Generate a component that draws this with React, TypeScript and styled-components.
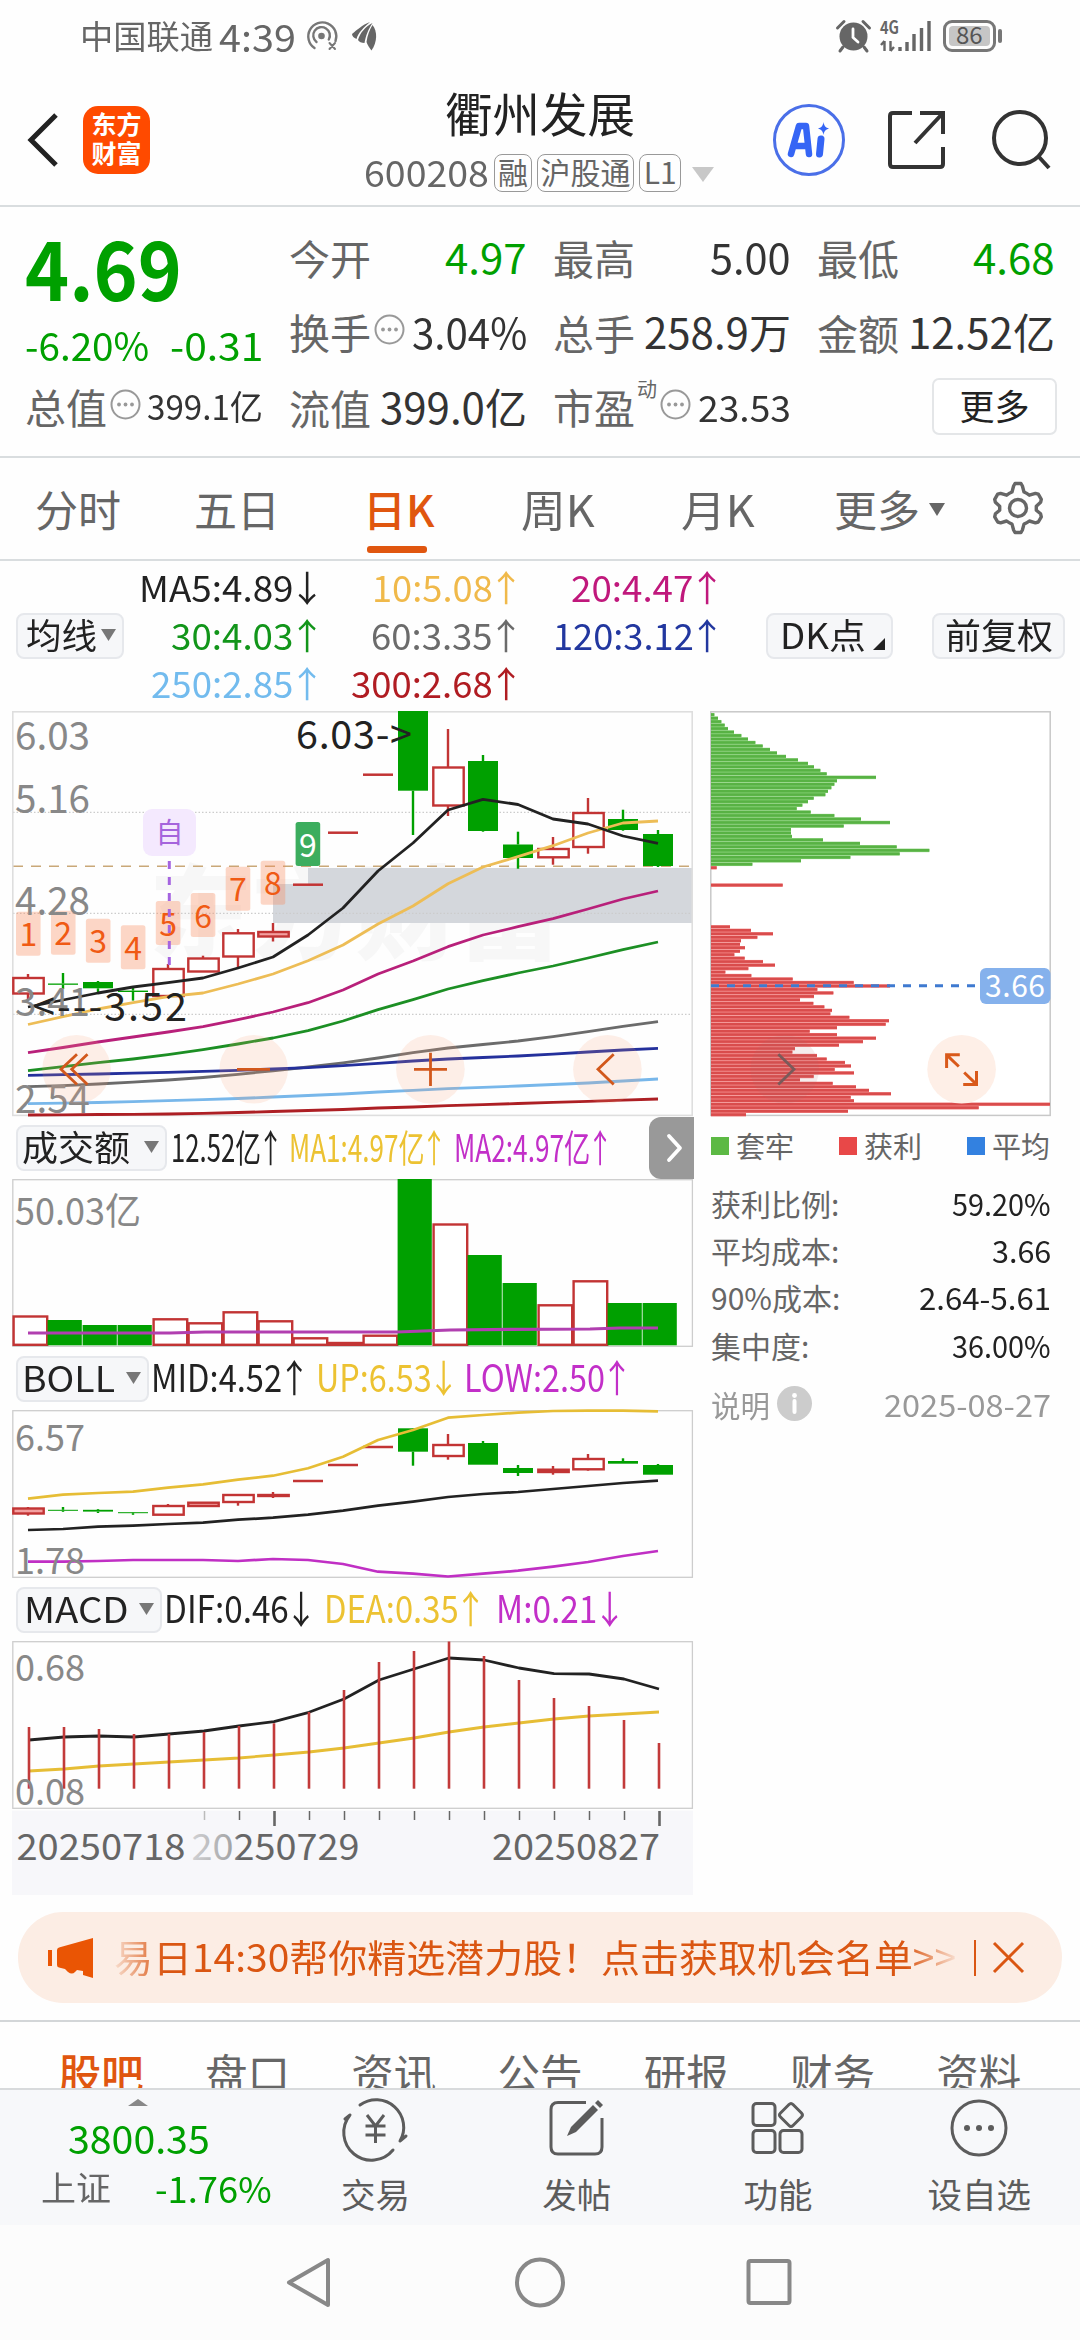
import React, { useLayoutEffect, useRef, useState } from "react";
import styled, { createGlobalStyle } from "styled-components";

const GREEN = "#00a000";
const CANDLE_RED = "#c23434";
const INK = "#222222";
const GRAY = "#666666";
const ORANGE = "#e0560f";
const FONT = '"Noto Sans CJK SC", "Noto Sans", sans-serif';

const GlobalStyle = createGlobalStyle`
  * { box-sizing: border-box; }
  body { margin: 0; background: #fefefe; font-family: ${FONT}; }
`;

/* ---------- text fitted to a column width ---------- */

const FitBox = styled.span<{ $w: number }>`
  display: block;
  flex: none;
  width: ${(p) => p.$w}px;
  white-space: nowrap;
  line-height: 1.2;
`;
const FitInner = styled.span`
  display: inline-block;
  transform-origin: 0 50%;
  vertical-align: top;
`;

function Fit({ w, children }: { w: number; children: React.ReactNode }) {
  const ref = useRef<HTMLSpanElement>(null);
  const [scale, setScale] = useState(1);
  useLayoutEffect(() => {
    if (ref.current) setScale(w / ref.current.offsetWidth);
  }, [w]);
  return (
    <FitBox $w={w}>
      <FitInner ref={ref} style={{ transform: `scaleX(${scale})` }}>
        {children}
      </FitInner>
    </FitBox>
  );
}

const ArrowGlyph = styled.span`
  display: inline-block;
  margin: 0 -0.2em 0 -0.13em;
`;
const Up = () => <ArrowGlyph>↑</ArrowGlyph>;
const Down = () => <ArrowGlyph>↓</ArrowGlyph>;

/* ---------- shell ---------- */

const Page = styled.div`
  width: 1080px;
  height: 2340px;
  overflow: hidden;
  display: flex;
  flex-direction: column;
  background: #fefefe;
  color: ${INK};
  font-family: ${FONT};
`;

const Icon = styled.svg`
  display: block;
  flex: none;
  fill: none;
  overflow: visible;
`;

/* ---------- status bar ---------- */

const StatusBar = styled.div`
  height: 72px;
  flex: none;
  display: flex;
  align-items: center;
  padding: 0 77px 0 80px;
  color: ${GRAY};
`;
const Carrier = styled.div`
  font-size: 33px;
  margin-right: 6px;
`;
const Clock = styled.div`
  font-size: 38px;
  margin-right: 10px;
  padding-bottom: 1px;
`;
const Spacer = styled.div`
  flex: 1;
`;
const StatusGlyphs = styled.div`
  display: flex;
  align-items: center;
  gap: 14px;
`;
const NetIcons = styled.div`
  display: flex;
  align-items: center;
  gap: 9px;
`;
const Battery = styled.div`
  position: relative;
  width: 53px;
  height: 32px;
  border: 3px solid #777;
  border-radius: 9px;
  padding: 3px;
  margin-left: 2px;
  margin-right: 7px;
  &::after {
    content: "";
    position: absolute;
    right: -9px;
    top: 6px;
    width: 4px;
    height: 14px;
    border-radius: 2px;
    background: #777;
  }
`;
const BatteryFill = styled.div`
  height: 20px;
  border-radius: 4px;
  background: #c6c6c6;
  font-size: 24px;
  display: flex;
  justify-content: center;
  align-items: center;
  padding-bottom: 3px;
  color: #555;
`;

/* ---------- header ---------- */

const Header = styled.header`
  height: 135px;
  flex: none;
  border-bottom: 2px solid #d9dddf;
  display: grid;
  grid-template-columns: 364px 350px 1fr;
`;
const HeaderLeft = styled.div`
  display: flex;
  align-items: center;
  padding: 2px 0 0 27px;
  gap: 25px;
`;
const Logo = styled.div`
  width: 67px;
  height: 68px;
  border-radius: 15px;
  background: #ff4a00;
  color: #fff;
  font-weight: 700;
  font-size: 25px;
  line-height: 29px;
  padding-top: 3px;
  text-align: center;
`;
const TitleBlock = styled.div`
  display: flex;
  flex-direction: column;
  padding-top: 12px;
`;
const StockName = styled.div`
  font-size: 47px;
  height: 60px;
  display: flex;
  padding-left: 81px;
`;
const CodeRow = styled.div`
  display: flex;
  align-items: center;
  height: 54px;
  margin-top: 1px;
  font-size: 36px;
  color: ${GRAY};
`;
const Tag = styled.span<{ $w: number; $ml: number }>`
  width: ${(p) => p.$w}px;
  height: 38px;
  margin-left: ${(p) => p.$ml}px;
  margin-top: 1px;
  border: 1.5px solid #999;
  border-radius: 8px;
  font-size: 30px;
  line-height: 32px;
  display: flex;
  justify-content: center;
`;
const HeaderTools = styled.div`
  display: flex;
  align-items: center;
  padding: 3px 0 0 59px;
`;
const AiBadge = styled.div`
  width: 72px;
  height: 72px;
  border: 3.5px solid #4a6fe8;
  border-radius: 50%;
  margin-right: 43px;
  display: flex;
  align-items: center;
  justify-content: center;
`;
const SearchSlot = styled.div`
  margin-left: 47px;
`;

/* ---------- quote ---------- */

const Quote = styled.section`
  height: 251px;
  flex: none;
  border-bottom: 2px solid #d9dddf;
  padding: 12px 25px 0 25px;
  display: grid;
  grid-template-columns: repeat(4, 1fr);
  column-gap: 26px;
`;
const QuoteCol = styled.div`
  display: flex;
  flex-direction: column;
`;
const QuoteCell = styled.div<{ $size?: number; $color?: string }>`
  height: 75px;
  display: flex;
  align-items: center;
  justify-content: space-between;
  font-size: ${(p) => p.$size ?? 42}px;
  color: ${(p) => p.$color ?? "#333"};
`;
const QuoteLabel = styled.div`
  display: flex;
  align-items: center;
  gap: 3px;
  font-size: 41px;
  color: ${GRAY};
`;
const Price = styled.div`
  height: 98px;
  display: flex;
  align-items: center;
  padding-bottom: 4px;
  font-size: 82px;
  font-weight: 700;
  color: ${GREEN};
`;
const Change = styled.div`
  height: 52px;
  display: flex;
  align-items: center;
  justify-content: space-between;
  padding-top: 2px;
  font-size: 39px;
  color: ${GREEN};
`;
const Dynamic = styled.sup`
  font-size: 20px;
  line-height: 20px;
  align-self: flex-start;
  margin: -3px 0 0 -1px;
`;
const MoreButton = styled.button`
  width: 125px;
  height: 57px;
  margin-left: auto;
  margin-right: -2px;
  border: 2px solid #e4e6e8;
  border-radius: 7px;
  background: #fff;
  font: 35px/1 ${FONT};
  color: ${INK};
  padding: 0 0 4px;
`;

/* ---------- period tabs ---------- */

const PeriodTabs = styled.nav`
  height: 103px;
  flex: none;
  border-bottom: 2px solid #d9dddf;
  display: flex;
  padding: 19px 36px 0 35px;
`;
const Tab = styled.div<{ $w: number; $active?: boolean }>`
  width: ${(p) => p.$w}px;
  flex: none;
  font-size: 43px;
  line-height: 62px;
  color: ${(p) => (p.$active ? ORANGE : GRAY)};
  font-weight: ${(p) => (p.$active ? 500 : 400)};
  display: flex;
  flex-direction: column;
  ${FitBox} {
    line-height: 62px;
  }
`;
const TabUnderline = styled.span`
  width: 60px;
  height: 7px;
  border-radius: 3px;
  background: ${ORANGE};
  margin: 7px 0 0 4px;
`;
const TabMore = styled.span`
  display: flex;
  align-items: center;
  gap: 9px;
`;
const GearSlot = styled.div`
  margin-top: 5px;
`;

/* ---------- moving averages ---------- */

const AverageBar = styled.section`
  height: 150px;
  flex: none;
  display: flex;
  align-items: center;
  padding: 0 16px;
`;
const Chip = styled.button<{ $w: number; $pl?: number; $ml?: number }>`
  width: ${(p) => p.$w}px;
  height: 46px;
  flex: none;
  display: flex;
  align-items: center;
  border: 2px solid #e6e8ec;
  border-radius: 8px;
  background: #f6f7f9;
  margin: 0 0 0 ${(p) => p.$ml ?? 0}px;
  padding: 0 0 4px ${(p) => p.$pl ?? 8}px;
  font: 35px/1.2 ${FONT};
  color: ${INK};
`;
const AverageGrid = styled.div`
  width: 594px;
  height: 144px;
  display: grid;
  grid-template-columns: 194px 199px 201px;
  grid-template-rows: repeat(3, 48px);
  font-size: 36px;
  margin-bottom: 3px;
`;
const Average = styled.div<{ $color: string }>`
  display: flex;
  align-items: center;
  justify-content: flex-end;
  color: ${(p) => p.$color};
`;

/* ---------- charts ---------- */

const Body = styled.main`
  display: flex;
  flex: none;
  height: 1186px;
  padding-left: 12px;
`;
const ChartColumn = styled.div`
  width: 682px;
  display: flex;
  flex-direction: column;
`;
const Plot = styled.svg`
  display: block;
  flex: none;
  overflow: visible;
  font-family: ${FONT};
`;
const IndicatorHeader = styled.div<{ $h: number }>`
  height: ${(p) => p.$h}px;
  flex: none;
  display: flex;
  align-items: center;
  padding-left: 4px;
  font-size: 38px;
`;
const Reading = styled.div<{ $color: string; $ml: number }>`
  margin-left: ${(p) => p.$ml}px;
  margin-bottom: 5px;
  color: ${(p) => p.$color};
`;
const Expander = styled.div`
  width: 45px;
  height: 62px;
  margin-left: auto;
  border-radius: 12px 0 0 12px;
  background: #999;
  display: flex;
  align-items: center;
  padding-left: 18px;
`;
const ChipsColumn = styled.aside`
  width: 341px;
  margin-left: 16px;
`;
const Legend = styled.div`
  height: 62px;
  display: flex;
  align-items: center;
  justify-content: space-between;
  padding: 0 1px 7px 1px;
  font-size: 29px;
  color: ${GRAY};
`;
const LegendItem = styled.div<{ $color: string }>`
  display: flex;
  align-items: center;
  gap: 7px;
  &::before {
    content: "";
    width: 18px;
    height: 18px;
    margin-top: 3px;
    background: ${(p) => p.$color};
  }
`;
const Stat = styled.div<{ $h?: number; $muted?: boolean }>`
  height: ${(p) => p.$h ?? 47.3}px;
  display: flex;
  align-items: center;
  justify-content: space-between;
  padding-left: 1px;
  font-size: 30px;
  color: ${(p) => (p.$muted ? "#999" : INK)};
`;
const StatLabel = styled.span<{ $muted?: boolean }>`
  display: flex;
  align-items: center;
  gap: 7px;
  color: ${(p) => (p.$muted ? "#999" : GRAY)};
`;

/* ---------- banner and bottom ---------- */

const Banner = styled.div`
  height: 91px;
  flex: none;
  margin: 15px 18px 17px;
  border-radius: 45px;
  background: #fcede4;
  color: #da5612;
  display: flex;
  align-items: center;
  padding-left: 30px;
`;
const Marquee = styled.div`
  margin: 0 18px 4px 20px;
  font-size: 38px;
  mask-image: linear-gradient(90deg, rgba(0, 0, 0, 0.1), #000 50px, #000 calc(100% - 50px), rgba(0, 0, 0, 0.1));
`;
const BannerRule = styled.span`
  width: 1.5px;
  height: 36px;
  background: #da5612;
  margin-right: 17px;
`;
const SectionTabs = styled.nav`
  height: 68px;
  flex: none;
  overflow: hidden;
  border-top: 2px solid #d3d6d8;
  display: flex;
  padding: 20px 28px 0;
`;
const SectionTab = styled.div<{ $active?: boolean }>`
  flex: 1;
  text-align: center;
  font-size: 42.5px;
  line-height: 60px;
  color: ${(p) => (p.$active ? ORANGE : GRAY)};
  font-weight: ${(p) => (p.$active ? 500 : 400)};
`;
const ActionBar = styled.div`
  height: 137px;
  flex: none;
  border-top: 2px solid #d8dadc;
  background: #f7f8fa;
  display: grid;
  grid-template-columns: 275px repeat(4, 201.2px);
`;
const IndexBlock = styled.div`
  color: ${GREEN};
  display: flex;
  flex-direction: column;
  align-items: center;
  padding-top: 9px;
  font-size: 39px;
`;
const IndexValue = styled.div`
  height: 54px;
  padding-top: 2px;
  margin: 6px 0 0 2px;
  line-height: 1;
  display: flex;
`;
const IndexRow = styled.div`
  width: 231px;
  margin-left: 38px;
  display: flex;
  align-items: center;
  justify-content: space-between;
  font-size: 36px;
  color: ${GREEN};
`;
const IndexName = styled.span`
  font-size: 34px;
  color: ${GRAY};
`;
const Action = styled.div`
  display: flex;
  flex-direction: column;
  align-items: center;
  padding-top: 9px;
  gap: 11px;
  font-size: 34.5px;
  color: #5c5c5c;
`;
const SystemNav = styled.div`
  flex: 1;
  background: #fcfcfc;
  display: flex;
  align-items: flex-start;
  padding: 32px 0 0 286px;
`;
const NavSlot = styled.div<{ $w: number }>`
  width: ${(p) => p.$w}px;
`;

/* ---------- data ---------- */

type Candle = { k: "r" | "g" | "l"; t: number; b: number; hi?: number; lo?: number };
const c = (k: Candle["k"], t: number, b = t, hi?: number, lo?: number): Candle => ({ k, t, b, hi, lo });

const DAILY: Candle[] = [
  c("r", 978, 993.5, 974, 1000), c("g", 983.5, 984.8, 973, 989), c("g", 982, 988.3, 981, 993),
  c("g", 990.6, 992, 988, 1000.6), c("r", 969, 996, 964), c("r", 958.5, 971.5, 955.7),
  c("r", 933.3, 956.5, 929, 967.5), c("r", 932, 936.5, 923, 941.5), c("l", 884.7), c("l", 832.7),
  c("l", 774.7), c("g", 711, 790.7, 711, 835), c("r", 767.5, 805.5, 729, 816),
  c("g", 761, 831, 755, 831.7), c("g", 844.5, 858, 831.7, 868.7), c("r", 849, 857.3, 837, 864.7),
  c("r", 813, 847, 798, 853.7), c("g", 819, 830, 809.7, 830.7), c("g", 834, 866, 830, 867),
];
const BOLL: Candle[] = [
  c("r", 1508.5, 1513.5, 1507, 1515.7), c("g", 1509.8, 1510.8, 1507, 1511.8), c("g", 1509.8, 1511.6, 1509, 1513),
  c("g", 1512.2, 1513.2, 1512, 1514.8), c("r", 1506, 1514.7, 1504), c("r", 1502.7, 1506),
  c("r", 1495, 1502, 1494, 1505.7), c("r", 1495, 1496, 1492, 1498), c("l", 1481), c("l", 1465),
  c("l", 1447), c("g", 1428.3, 1451.7, 1428, 1465.7), c("r", 1445, 1456, 1434, 1459.7),
  c("g", 1443, 1464.7, 1441), c("g", 1468, 1473, 1465, 1476), c("r", 1469.7, 1472, 1466, 1474.7),
  c("r", 1459, 1469.3, 1454, 1470.7), c("g", 1461, 1463.7, 1458.3), c("g", 1465, 1474.7, 1464),
];

const AVERAGES: { color: string; y: number[] }[] = [
  { color: "#ad1f24", y: [1115, 1114.8, 1114.5, 1114.3, 1114, 1113.3, 1112.5, 1111.5, 1110.5, 1109.5, 1108, 1107, 1105.7, 1104.6, 1103.5, 1102.4, 1101.3, 1100.2, 1099] },
  { color: "#78b7ea", y: [1103.7, 1103.2, 1102.5, 1101.7, 1100.7, 1099.6, 1098.5, 1097, 1095.5, 1094, 1092, 1090.3, 1088.7, 1087.3, 1086, 1084.5, 1083, 1081, 1079] },
  { color: "#6b6b6b", y: [1086.7, 1085.6, 1084, 1082.2, 1080, 1077.5, 1074.3, 1070.8, 1067, 1062.8, 1058, 1052.6, 1048, 1044.5, 1041, 1036.6, 1031.7, 1026.3, 1021.7] },
  { color: "#24309c", y: [1075.3, 1074.7, 1074, 1073.2, 1072.3, 1071.3, 1070.3, 1069, 1067.7, 1065.7, 1063.3, 1061, 1059, 1057.5, 1056, 1054.2, 1052, 1050, 1048.3] },
  { color: "#1c8f24", y: [1070.7, 1066.7, 1062.7, 1059, 1054.7, 1049.7, 1044, 1038, 1030.7, 1021, 1009.7, 999.7, 989, 980.7, 973, 966, 958, 949.7, 942] },
  { color: "#b8207a", y: [1052.7, 1047.5, 1042, 1037, 1032, 1026.7, 1019.7, 1012, 1002.7, 990, 974, 961, 946.7, 935, 926.7, 918.7, 909, 899, 891] },
  { color: "#edbd56", y: [1024.5, 1016.7, 1009, 1002.7, 996.7, 993, 984, 974, 960.7, 945, 924, 906, 883.7, 867, 856.7, 845.7, 833, 823, 821] },
  { color: "#222222", y: [1007, 1000, 993, 987, 982.7, 978, 968, 957, 935, 908, 871, 843, 810, 799.3, 804.5, 819, 824, 836, 843.3] },
];
const BANDS = [
  { color: "#e6bd35", y: [1498.7, 1494.7, 1493, 1491.7, 1487.7, 1484.3, 1479.7, 1475.7, 1468.3, 1456.7, 1440, 1430, 1417.7, 1415, 1412.7, 1411, 1410.7, 1410.7, 1411.3] },
  { color: "#222222", y: [1530, 1529, 1526.7, 1525.7, 1524, 1522.7, 1519.7, 1517.7, 1514.7, 1510.7, 1505.7, 1501.7, 1497, 1494, 1492, 1489, 1486, 1483, 1480.7] },
  { color: "#c02fc4", y: [1561.7, 1561.7, 1561, 1560, 1560, 1560, 1561, 1559, 1560, 1564, 1571.7, 1573.7, 1576.5, 1573.7, 1570.7, 1566.7, 1562, 1556, 1551] },
];
const VOLUME: [string, number][] = [
  ["r", 1316.5], ["g", 1320], ["g", 1325], ["g", 1325], ["r", 1319.3], ["r", 1323.3], ["r", 1312.3],
  ["r", 1321.3], ["r", 1338.3], ["r", 1343], ["r", 1335.7], ["g", 1179], ["r", 1224.5], ["g", 1255],
  ["g", 1283], ["r", 1305.3], ["r", 1281.3], ["g", 1303], ["g", 1303],
];
const MACD_BARS = [1727, 1727, 1729, 1734, 1734, 1732, 1726, 1723.3, 1712, 1690, 1662, 1651, 1641.5, 1656, 1680, 1698, 1706, 1720, 1743];
const DIF = [1740, 1737, 1736, 1737, 1734, 1731, 1726, 1721.7, 1712.3, 1699, 1680, 1669, 1658, 1660, 1668, 1673.7, 1674, 1679, 1689];
const DEA = [1771, 1769, 1766, 1764, 1762, 1760, 1758, 1755, 1752, 1748, 1743, 1738, 1732, 1727, 1723, 1719, 1716, 1714, 1712];

const CHIPS_HELD_GREEN = [10, 21, 31, 41, 51, 69, 91, 111, 133, 155, 177, 198, 225, 261, 291, 309, 328, 347, 495, 378, 370, 361, 351, 343, 308, 291, 274, 257, 299, 370, 450, 537, 398, 240, 240, 243, 336, 447, 557, 655, 566, 418, 270, 124];
const CHIPS_RED = [17, 0, 0, 0, 0, 215, 0, 0, 0, 0, 0, 0, 0, 0, 0, 0, 0, 57, 120, 186, 139, 90, 87, 102, 87, 70, 101, 156, 192, 112, 43, 121, 245, 428, 537, 319, 367, 309, 267, 307, 340, 363, 358, 415, 534, 524, 378, 296, 378, 495, 456, 384, 252, 244, 318, 347, 402, 420, 371, 429, 308, 267, 365, 435, 474, 540, 419, 429, 1017, 803, 411, 105];

const SIGNALS: [string, number][] = [["1", 911.7], ["2", 910.7], ["3", 918.7], ["4", 925.3], ["5", 901], ["6", 893], ["7", 866.7], ["8", 860.7], ["9", 822]];

const X0 = 28;
const STEP = 35;
const pts = (y: number[], x0 = X0) => y.map((v, i) => `${x0 + i * STEP},${v}`).join(" ");

/* ---------- chart parts ---------- */

function Candles({ data }: { data: Candle[] }) {
  return (
    <>
      {data.map((d, i) => {
        const x = X0 + i * STEP;
        const stroke = d.k === "g" ? GREEN : CANDLE_RED;
        if (d.k === "l") return <path key={i} d={`M${x - 15} ${d.t}H${x + 15}`} stroke={stroke} strokeWidth="2.5" />;
        return (
          <g key={i} stroke={stroke} strokeWidth="2.4">
            {d.hi && <path d={`M${x} ${d.hi}V${d.t}`} />}
            {d.lo && <path d={`M${x} ${d.b}V${d.lo}`} />}
            {d.k === "g" ? (
              <rect x={x - 15} y={d.t} width="30" height={d.b - d.t} fill={GREEN} stroke="none" />
            ) : (
              <rect x={x - 14.7} y={d.t} width="30.4" height={d.b - d.t} fill={d.b - d.t < 6 ? "#f3a0a0" : "#fff"} />
            )}
          </g>
        );
      })}
    </>
  );
}

const Frame = ({ y, h }: { y: number; h: number }) => (
  <rect x="12.8" y={y} width="679.6" height={h} fill="none" stroke="#cdcdcd" strokeWidth="1.3" />
);

const ScaleText = ({ x = 15, y, size = 39.5, w = 75, children }: { x?: number; y: number; size?: number; w?: number; children: string }) => (
  <text x={x} y={y} fontSize={size} textLength={w} lengthAdjust="spacingAndGlyphs" fill="#888">
    {children}
  </text>
);

function PriceChart() {
  return (
    <Plot width="682" height="406" viewBox="12 711 682 406">
      <text x="149" y="952" fontSize="103" fontWeight="900" fill="#000" opacity="0.025">东方财富</text>
      <path d="M273 884H308V868H692V923H273Z" fill="#d4d7dc" />
      <g stroke="#ccc" strokeWidth="1.2" strokeDasharray="1.5 2">
        <path d="M13 812.3H692M13 913.3H692M13 1014.3H692" />
      </g>
      <path d="M13 866.3H692" stroke="#c9a878" strokeWidth="1.4" strokeDasharray="10 8" />
      <rect x="12.8" y="711.8" width="679.4" height="403.6" fill="none" stroke="#dedede" strokeWidth="1.6" />
      <Candles data={DAILY} />
      {SIGNALS.map(([n, y], i) => (
        <g key={n}>
          <rect x={16 + i * 34.95} y={y} width="24.6" height="44" rx="2.5" fill={n === "9" ? "#3cad5e" : "#f98a5a"} fillOpacity={n === "9" ? 1 : 0.34} />
          <text x={28.3 + i * 34.95} y={y + 34.5} fontSize="32" textAnchor="middle" fill={n === "9" ? "#fff" : "#f05a14"}>{n}</text>
        </g>
      ))}
      <path d="M169.3 861V966" stroke="#a564e0" strokeWidth="3" strokeDasharray="8 8" />
      <rect x="143" y="809" width="53" height="47" rx="9" fill="#f4e9fe" />
      <text x="169.6" y="842.5" fontSize="28" textAnchor="middle" fill="#a564dc">自</text>
      <g fill="none" strokeWidth="2.8" strokeLinejoin="round">
        {AVERAGES.map((a) => <polyline key={a.color} points={pts(a.y)} stroke={a.color} />)}
      </g>
      <ScaleText y={750.3}>6.03</ScaleText>
      <ScaleText y={813.2}>5.16</ScaleText>
      <ScaleText y={915.3}>4.28</ScaleText>
      <ScaleText y={1016}>3.41</ScaleText>
      <ScaleText y={1113.2}>2.54</ScaleText>
      <text x="296" y="748.5" fontSize="39.5" textLength="116" fill={INK}>{"6.03->"}</text>
      <text x="33" y="1021" fontSize="39.5" textLength="154" fill={INK}>{"<---3.52"}</text>
      <g fill="#f9a078" fillOpacity="0.17">
        <circle cx="76.5" cy="1069.2" r="34.3" />
        <circle cx="253.7" cy="1069.2" r="34.3" />
        <circle cx="430.4" cy="1069.2" r="34.3" />
        <circle cx="607.4" cy="1069.2" r="34.3" />
      </g>
      <path
        d="M77 1054.3L61 1069.3L77 1084.5M87.5 1054.3L71.7 1069.3L87.5 1084.5M237 1069.3H270M414 1069.3H447M430.5 1052.7V1086M613.7 1054.3L598 1069.3L613.7 1084.5"
        fill="none" stroke="#d2581c" strokeWidth="2.8"
      />
    </Plot>
  );
}

function VolumeChart() {
  return (
    <Plot width="682" height="168" viewBox="12 1179 682 168">
      <Frame y={1179.7} h={166.6} />
      <ScaleText y={1224.5} size={37} w={126}>50.03亿</ScaleText>
      {VOLUME.map(([k, y], i) => {
        const x = 12.6 + i * 35;
        return k === "g"
          ? <rect key={i} x={x} y={y} width="34.2" height={1345.3 - y} fill={GREEN} />
          : <rect key={i} x={x + 1} y={y} width="33.6" height={Math.max(1344.8 - y, 1)} fill="#fff" stroke={CANDLE_RED} strokeWidth="2.4" />;
      })}
      <path d="M28 1333H170L205 1332H397L450 1330L510 1329.3L590 1329L620 1328H658" fill="none" stroke="#b13fb0" strokeWidth="3.2" />
    </Plot>
  );
}

function BollChart() {
  return (
    <Plot width="682" height="168" viewBox="12 1410 682 168">
      <Frame y={1410.7} h={166.6} />
      <Candles data={BOLL} />
      <g fill="none" strokeWidth="2.7" strokeLinejoin="round">
        {BANDS.map((a) => <polyline key={a.color} points={pts(a.y)} stroke={a.color} />)}
      </g>
      <ScaleText y={1450.5} size={37} w={70}>6.57</ScaleText>
      <ScaleText y={1574} size={37} w={70}>1.78</ScaleText>
    </Plot>
  );
}

function MacdChart() {
  return (
    <Plot width="682" height="254" viewBox="12 1641 682 254">
      <defs>
        <linearGradient id="dateFade" gradientUnits="userSpaceOnUse" x1="190" x2="240" y1="0" y2="0">
          <stop offset="0" stopColor={GRAY} stopOpacity="0.25" />
          <stop offset="0.8" stopColor={GRAY} stopOpacity="0.55" />
          <stop offset="1" stopColor={GRAY} />
        </linearGradient>
      </defs>
      <Frame y={1641.7} h={166.6} />
      <rect x="12" y="1810.5" width="681" height="84.5" fill="#f7f7fa" />
      <g fill="none" strokeWidth="2.8" strokeLinejoin="round">
        <polyline points={pts(DIF, 29)} stroke={INK} />
        <polyline points={pts(DEA, 29)} stroke="#e6bd35" />
      </g>
      <g stroke="#c23a3a" strokeWidth="2.6">
        {MACD_BARS.map((y, i) => <path key={i} d={`M${29 + i * 35} ${y}V1788.7`} />)}
      </g>
      <ScaleText y={1681} size={37} w={70}>0.68</ScaleText>
      <ScaleText y={1804.7} size={37} w={70}>0.08</ScaleText>
      {Array.from({ length: 14 }, (_, i) => i + 5).map((i) => {
        const major = i === 7 || i === 18;
        return <path key={i} d={`M${29.5 + i * 35} 1811V${major ? 1826 : 1820}`} stroke={i === 5 ? "#bbb" : GRAY} strokeWidth={major ? 2.6 : 1.5} />;
      })}
      <g fontSize="36" fill={GRAY}>
        <text x="16.5" y="1860" textLength="169" lengthAdjust="spacingAndGlyphs">20250718</text>
        <text x="191.5" y="1860" textLength="168" lengthAdjust="spacingAndGlyphs" fill="url(#dateFade)">20250729</text>
        <text x="492" y="1860" textLength="168" lengthAdjust="spacingAndGlyphs">20250827</text>
      </g>
    </Plot>
  );
}

function ChipChart() {
  const bar = (len: number, i: number, dark: string, light: string) => {
    const y = 713 + i * 3.478;
    return len ? (
      <g key={i}>
        <rect x="711" y={y} width={len / 3} height="3.5" fill={light} />
        <rect x="711" y={y + 0.4} width={len / 3} height="2.5" fill={dark} />
      </g>
    ) : null;
  };
  return (
    <Plot width="341" height="406" viewBox="710 711 341 406">
      <rect x="710.8" y="711.8" width="339.4" height="403.6" fill="#fff" stroke="#c8c8c8" strokeWidth="1.5" />
      {CHIPS_HELD_GREEN.map((l, i) => bar(l, i, "#58b244", "#80cd70"))}
      {CHIPS_RED.map((l, i) => bar(l, i + 44, "#d94c4c", "#f28282"))}
      <path d="M711 985.7H977" stroke="#3f7ad0" strokeWidth="3" strokeDasharray="8 8" />
      <rect x="980" y="968" width="70.5" height="36" rx="6" fill="#85b1ec" />
      <text x="985" y="997" fontSize="30" textLength="60" fill="#fff">3.66</text>
      <circle cx="784.7" cy="1069.2" r="34.3" fill="#b06a6a" fillOpacity="0.12" />
      <path d="M778.3 1054.3L794 1069.3L778.3 1084.5" fill="none" stroke="#7a5a5a" strokeWidth="2.8" />
      <circle cx="961.6" cy="1069.2" r="34.3" fill="#feefe7" />
      <path
        d="M959.8 1054.8H946.6V1068M946.6 1054.8L958.8 1066.5M963.2 1084.4H976.5V1071M976.5 1084.4L964.2 1072.5"
        fill="none" stroke="#d9591a" strokeWidth="3"
      />
    </Plot>
  );
}

/* ---------- small icons ---------- */

const Caret = ({ pad = 0, w = 15, h = 12, color = "#777" }: { pad?: number; w?: number; h?: number; color?: string }) => (
  <Icon width={w + pad} height={h} viewBox={`${-pad} 0 ${w + pad} ${h}`}>
    <path d={`M0 1H${w}L${w / 2} ${h + 1}Z`} fill={color} />
  </Icon>
);
const Dots = () => (
  <Icon width="31" height="31" viewBox="0 0 31 31">
    <circle cx="15.5" cy="13.5" r="14" stroke="#999" strokeWidth="2" />
    <g fill="#999"><circle cx="9" cy="13.5" r="1.9" /><circle cx="15.5" cy="13.5" r="1.9" /><circle cx="22" cy="13.5" r="1.9" /></g>
  </Icon>
);

function StatusIcons() {
  return (
    <StatusGlyphs>
      <Icon width="32" height="30" viewBox="0 0 32 30" stroke="#777" strokeWidth="2.4" strokeLinecap="round">
        <path d="M8.5 27A14 14 0 1 1 29.5 20" />
        <path d="M10.5 21A8.3 8.3 0 1 1 22.8 18.5" />
        <circle cx="15.5" cy="15" r="3.3" fill="#777" stroke="none" />
        <path d="M23.5 22L29 28M29 22L23.5 28" strokeWidth="2" />
      </Icon>
      <Icon width="25" height="29" viewBox="0 0 25 29">
        <g fill={GRAY}>
          <path d="M0 12C5 8 10 3 18 0C12 5 6 11 4.5 17C2 16 0 14 0 12Z" />
          <path d="M6 18C8 11 13 5 20.5 1C16 8 14 13 12.5 21C9.5 21 7 20 6 18Z" />
          <path d="M20.5 3C25.5 9 25.5 20 19.5 28.5C17.5 26 15.5 23 14.5 20C15.5 13 17.5 8 20.5 3Z" />
        </g>
      </Icon>
    </StatusGlyphs>
  );
}

const GEAR = "M20.6 4L22 1.5H28L29.4 4L31 10C33 10.8 34.8 11.9 36.4 13.2L42.4 11.4L45.3 12.2L48.3 17.4L47.6 20.3L43.3 24.2V28.2L47.6 31.8L48.3 34.8L45.3 40L42.4 40.8L36.4 39C34.8 40.3 33 41.3 31 42.1L29.4 48L28 50.5H22L20.6 48L19 42.1C17 41.3 15.2 40.3 13.6 39L7.6 40.8L4.7 40L1.7 34.8L2.4 31.8L6.7 28.2V24.2L2.4 20.3L1.7 17.4L4.7 12.2L7.6 11.4L13.6 13.2C15.2 11.9 17 10.8 19 10Z";

/* ---------- app ---------- */

export default function App() {
  return (
    <Page>
      <GlobalStyle />
      <StatusBar>
        <Carrier><Fit w={133}>中国联通</Fit></Carrier>
        <Clock><Fit w={77}>4:39</Fit></Clock>
        <StatusIcons />
        <Spacer />
        <NetIcons>
          <Icon width="35" height="32" viewBox="0 0 35 32">
            <circle cx="17.5" cy="16.5" r="14" fill={GRAY} />
            <path d="M1.5 8L8 1.5M33.5 8L27 1.5M7 27L4 31M28 27L31 31" stroke={GRAY} strokeWidth="3" strokeLinecap="round" />
            <path d="M17 9V17.5L22 22" stroke="#fff" strokeWidth="2.8" strokeLinecap="round" />
          </Icon>
          <Icon width="52" height="32" viewBox="0 0 52 32">
            <text x="0" y="14" fontSize="18" fontWeight="700" textLength="19" lengthAdjust="spacingAndGlyphs" fill={GRAY} fontFamily={FONT}>4G</text>
            <path d="M4.5 31V21M4.5 21L1 25M10.5 21V31M10.5 31L14 27" stroke={GRAY} strokeWidth="2.4" />
            <path d="M20 27V31M27 22V31M34 14V31M41.5 8V31M49 1V31" stroke={GRAY} strokeWidth="3.4" />
          </Icon>
          <Battery><BatteryFill><Fit w={27}>86</Fit></BatteryFill></Battery>
        </NetIcons>
      </StatusBar>

      <Header>
        <HeaderLeft>
          <Icon width="31" height="54" viewBox="0 0 31 54"><path d="M29 2L4 27L29 52" stroke={INK} strokeWidth="5" /></Icon>
          <Logo>东方<br />财富</Logo>
        </HeaderLeft>
        <TitleBlock>
          <StockName><Fit w={190}>衢州发展</Fit></StockName>
          <CodeRow>
            <Fit w={125}>600208</Fit>
            <Tag $w={38} $ml={5}>融</Tag>
            <Tag $w={98} $ml={5}>沪股通</Tag>
            <Tag $w={42} $ml={5}>L1</Tag>
            <Icon width="33" height="16" viewBox="-11 -3 33 16"><path d="M0 0H22L11 15Z" fill="#c8c8c8" /></Icon>
          </CodeRow>
        </TitleBlock>
        <HeaderTools>
          <AiBadge>
            <Icon width="42" height="36" viewBox="0 0 42 36">
              <path d="M3 32L11 4H18L21 32M8 24H20" stroke="#3565f5" strokeWidth="6.5" strokeLinejoin="round" strokeLinecap="round" />
              <path d="M33 17L31.5 32" stroke="#3565f5" strokeWidth="7" strokeLinecap="round" />
              <path d="M35.5 0C36.2 4 37.5 5.5 41 6.5C37.5 7.5 36.2 9 35.5 13C34.8 9 33.5 7.5 30 6.5C33.5 5.5 34.8 4 35.5 0Z" fill="#3565f5" />
            </Icon>
          </AiBadge>
          <Icon width="57" height="58" viewBox="0 0 57 58" stroke="#333" strokeWidth="4">
            <path d="M24 2H5Q2 2 2 5V53Q2 56 5 56H52Q55 56 55 53V36M32 2H55V23M55 2L27 32" />
          </Icon>
          <SearchSlot>
            <Icon width="59" height="60" viewBox="0 0 59 60" stroke="#333" strokeWidth="4">
              <circle cx="28" cy="28" r="26" /><path d="M47 47L57 58" />
            </Icon>
          </SearchSlot>
        </HeaderTools>
      </Header>

      <Quote>
        <QuoteCol>
          <Price><Fit w={157}>4.69</Fit></Price>
          <Change><Fit w={124}>-6.20%</Fit><Fit w={93}>-0.31</Fit></Change>
          <QuoteCell $size={34}>
            <QuoteLabel><Fit w={82}>总值</Fit><Dots /></QuoteLabel>
            <Fit w={116}>399.1亿</Fit>
          </QuoteCell>
        </QuoteCol>
        <QuoteCol>
          <QuoteCell $color={GREEN}><QuoteLabel>今开</QuoteLabel><Fit w={82}>4.97</Fit></QuoteCell>
          <QuoteCell><QuoteLabel><Fit w={82}>换手</Fit><Dots /></QuoteLabel><Fit w={115}>3.04%</Fit></QuoteCell>
          <QuoteCell><QuoteLabel>流值</QuoteLabel><Fit w={147}>399.0亿</Fit></QuoteCell>
        </QuoteCol>
        <QuoteCol>
          <QuoteCell><QuoteLabel>最高</QuoteLabel><Fit w={81}>5.00</Fit></QuoteCell>
          <QuoteCell><QuoteLabel>总手</QuoteLabel><Fit w={147}>258.9万</Fit></QuoteCell>
          <QuoteCell $size={36}>
            <QuoteLabel><Fit w={82}>市盈</Fit><Dynamic>动</Dynamic><Dots /></QuoteLabel>
            <Fit w={93}>23.53</Fit>
          </QuoteCell>
        </QuoteCol>
        <QuoteCol>
          <QuoteCell $color={GREEN}><QuoteLabel>最低</QuoteLabel><Fit w={82}>4.68</Fit></QuoteCell>
          <QuoteCell><QuoteLabel>金额</QuoteLabel><Fit w={147}>12.52亿</Fit></QuoteCell>
          <QuoteCell><MoreButton>更多</MoreButton></QuoteCell>
        </QuoteCol>
      </Quote>

      <PeriodTabs>
        <Tab $w={159}>分时</Tab>
        <Tab $w={169}>五日</Tab>
        <Tab $w={158} $active><Fit w={72}>日K</Fit><TabUnderline /></Tab>
        <Tab $w={160}><Fit w={74}>周K</Fit></Tab>
        <Tab $w={153}><Fit w={74}>月K</Fit></Tab>
        <Tab $w={159}><TabMore>更多<Caret w={16} h={13} color={GRAY} /></TabMore></Tab>
        <GearSlot>
          <Icon width="50" height="52" viewBox="0 0 50 52" stroke={GRAY} strokeWidth="3.4" strokeLinejoin="round">
            <path d={GEAR} /><circle cx="25" cy="26" r="8.5" />
          </Icon>
        </GearSlot>
      </PeriodTabs>

      <AverageBar>
        <Chip $w={108}><Fit w={71}>均线</Fit><Caret pad={4} /></Chip>
        <AverageGrid>
          <Average $color={INK}><Fit w={179}>MA5:4.89<Down /></Fit></Average>
          <Average $color="#f0b94a"><Fit w={145}>10:5.08<Up /></Fit></Average>
          <Average $color="#c0187c"><Fit w={147}>20:4.47<Up /></Fit></Average>
          <Average $color="#12951a"><Fit w={147}>30:4.03<Up /></Fit></Average>
          <Average $color="#6b6b6b"><Fit w={146}>60:3.35<Up /></Fit></Average>
          <Average $color="#22379f"><Fit w={165}>120:3.12<Up /></Fit></Average>
          <Average $color="#72bbee"><Fit w={167}>250:2.85<Up /></Fit></Average>
          <Average $color="#b01c22"><Fit w={166}>300:2.68<Up /></Fit></Average>
        </AverageGrid>
        <Chip $w={127} $ml={48} $pl={10}>
          <Fit w={86}>DK点</Fit>
          <Icon width="22" height="12" viewBox="-8 -10 22 12"><path d="M13 0V12H1Z" fill={INK} /></Icon>
        </Chip>
        <Chip $w={133} $ml={39} $pl={10}><Fit w={108}>前复权</Fit></Chip>
      </AverageBar>

      <Body>
        <ChartColumn>
          <PriceChart />
          <IndicatorHeader $h={62}>
            <Chip $w={151} $pl={3}><Fit w={108}>成交额</Fit><Caret pad={15} /></Chip>
            <Reading $color={INK} $ml={4}><Fit w={107}>12.52亿<Up /></Fit></Reading>
            <Reading $color="#ecc232" $ml={11}><Fit w={153}>MA1:4.97亿<Up /></Fit></Reading>
            <Reading $color="#c22fc8" $ml={12}><Fit w={154}>MA2:4.97亿<Up /></Fit></Reading>
            <Expander>
              <Icon width="15" height="28" viewBox="0 0 15 28"><path d="M2 2L13 14L2 26" stroke="#fff" strokeWidth="3.8" strokeLinecap="round" strokeLinejoin="round" /></Icon>
            </Expander>
          </IndicatorHeader>
          <VolumeChart />
          <IndicatorHeader $h={63}>
            <Chip $w={133} $pl={1}><Fit w={93}>BOLL</Fit><Caret pad={14} /></Chip>
            <Reading $color={INK} $ml={2}><Fit w={153}>MID:4.52<Up /></Fit></Reading>
            <Reading $color="#ecc232" $ml={12}><Fit w={137}>UP:6.53<Down /></Fit></Reading>
            <Reading $color="#c22fc8" $ml={11}><Fit w={163}>LOW:2.50<Up /></Fit></Reading>
          </IndicatorHeader>
          <BollChart />
          <IndicatorHeader $h={63}>
            <Chip $w={146} $pl={1}><Fit w={105}>MACD</Fit><Caret pad={15} /></Chip>
            <Reading $color={INK} $ml={2}><Fit w={147}>DIF:0.46<Down /></Fit></Reading>
            <Reading $color="#ecc232" $ml={13}><Fit w={157}>DEA:0.35<Up /></Fit></Reading>
            <Reading $color="#c22fc8" $ml={15}><Fit w={124}>M:0.21<Down /></Fit></Reading>
          </IndicatorHeader>
          <MacdChart />
        </ChartColumn>
        <ChipsColumn>
          <ChipChart />
          <Legend>
            <LegendItem $color="#5cb944">套牢</LegendItem>
            <LegendItem $color="#e84848">获利</LegendItem>
            <LegendItem $color="#3381e0">平均</LegendItem>
          </Legend>
          <Stat><StatLabel>获利比例:</StatLabel><Fit w={99}>59.20%</Fit></Stat>
          <Stat><StatLabel>平均成本:</StatLabel><Fit w={59}>3.66</Fit></Stat>
          <Stat><StatLabel>90%成本:</StatLabel><Fit w={132}>2.64-5.61</Fit></Stat>
          <Stat><StatLabel>集中度:</StatLabel><Fit w={99}>36.00%</Fit></Stat>
          <Stat $h={71} $muted>
            <StatLabel $muted>
              <Fit w={59}>说明</Fit>
              <Icon width="35" height="35" viewBox="0 0 35 35">
                <circle cx="17.5" cy="17.5" r="17.5" fill="#ccc" />
                <path d="M17.5 15V26" stroke="#fff" strokeWidth="4" strokeLinecap="round" /><circle cx="17.5" cy="9.5" r="2.4" fill="#fff" />
              </Icon>
            </StatLabel>
            <Fit w={167}>2025-08-27</Fit>
          </Stat>
        </ChipsColumn>
      </Body>

      <Banner>
        <Icon width="46" height="40" viewBox="0 0 46 40">
          <path d="M0 12H4V28H0Z" fill="#ea5504" />
          <path d="M9 12Q9 10 11 9.5L45 0V40L35 37V33L29 32L27 34Q24 37 20 34L17 31L11 29.5Q9 29 9 27Z" fill="#ea5504" />
        </Icon>
        <Marquee><Fit w={842}>易日14:30帮你精选潜力股！点击获取机会名单&gt;&gt;</Fit></Marquee>
        <BannerRule />
        <Icon width="31" height="31" viewBox="0 0 31 31"><path d="M1 1L30 30M30 1L1 30" stroke="#da5612" strokeWidth="3" /></Icon>
      </Banner>

      <SectionTabs>
        <SectionTab $active>股吧</SectionTab>
        <SectionTab>盘口</SectionTab>
        <SectionTab>资讯</SectionTab>
        <SectionTab>公告</SectionTab>
        <SectionTab>研报</SectionTab>
        <SectionTab>财务</SectionTab>
        <SectionTab>资料</SectionTab>
      </SectionTabs>

      <ActionBar>
        <IndexBlock>
          <Icon width="20" height="7" viewBox="0 0 20 7"><path d="M0 7L10 0L20 7Z" fill="#888" /></Icon>
          <IndexValue><Fit w={142}>3800.35</Fit></IndexValue>
          <IndexRow><IndexName><Fit w={70}>上证</Fit></IndexName><Fit w={117}>-1.76%</Fit></IndexRow>
        </IndexBlock>
        <Action>
          <Icon width="65" height="58" viewBox="0 0 65 58" stroke="#5c5c5c" strokeWidth="3">
            <path d="M17 6A27.5 27.5 0 0 1 57 42L63 37M50 51A27.5 27.5 0 0 1 7 16L2 20" strokeLinecap="round" strokeLinejoin="round" />
            <path d="M24 16L32.5 27L41 16M32.5 27V44M22.5 27H42.5M22.5 36H42.5" />
          </Icon>
          交易
        </Action>
        <Action>
          <Icon width="55" height="58" viewBox="0 0 55 58" stroke="#5c5c5c" strokeWidth="3">
            <path d="M37 3.5H9Q2 3.5 2 10.5V48Q2 55 9 55H46Q53 55 53 48V19" />
            <path d="M18 37L22 28L44 6L49 11L27 33Z" fill="#5c5c5c" stroke="none" /><path d="M46 4L49 1L54 6L51 9Z" fill="#5c5c5c" stroke="none" />
          </Icon>
          发帖
        </Action>
        <Action>
          <Icon width="54" height="58" viewBox="0 0 54 58" stroke="#5c5c5c" strokeWidth="3">
            <rect x="2" y="4.5" width="22" height="22" rx="3.5" />
            <rect x="2" y="31.5" width="22" height="22" rx="3.5" />
            <rect x="29" y="31.5" width="22" height="22" rx="3.5" />
            <path d="M38 5.5Q40 3.5 42 5.5L50.5 14Q52.5 16 50.5 18L42 26.5Q40 28.5 38 26.5L29.5 18Q27.5 16 29.5 14Z" />
          </Icon>
          功能
        </Action>
        <Action>
          <Icon width="58" height="58" viewBox="0 0 58 58" stroke="#5c5c5c" strokeWidth="3">
            <circle cx="29" cy="29" r="27" />
            <g fill="#5c5c5c" stroke="none"><circle cx="17" cy="29" r="3" /><circle cx="29" cy="29" r="3" /><circle cx="41" cy="29" r="3" /></g>
          </Icon>
          设自选
        </Action>
      </ActionBar>

      <SystemNav>
        <NavSlot $w={229}>
          <Icon width="45" height="51" viewBox="0 0 45 51" stroke="#888" strokeWidth="4" strokeLinejoin="round"><path d="M42 3V48L3 25.5Z" /></Icon>
        </NavSlot>
        <NavSlot $w={231}>
          <Icon width="50" height="51" viewBox="0 0 50 51" stroke="#888" strokeWidth="4"><circle cx="25" cy="25.5" r="23" /></Icon>
        </NavSlot>
        <NavSlot $w={50}>
          <Icon width="46" height="51" viewBox="0 0 46 51" stroke="#888" strokeWidth="4"><rect x="2.5" y="4" width="41" height="42" rx="2" /></Icon>
        </NavSlot>
      </SystemNav>
    </Page>
  );
}
